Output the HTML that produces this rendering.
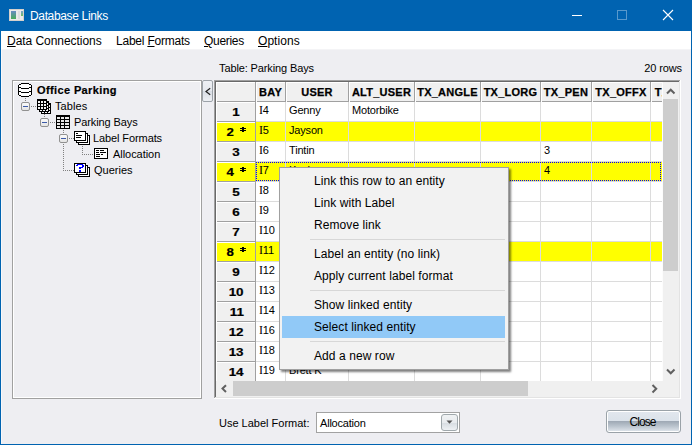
<!DOCTYPE html>
<html><head><meta charset="utf-8"><style>
html,body{margin:0;padding:0;}
body{width:692px;height:445px;position:relative;overflow:hidden;font-family:'Liberation Sans', sans-serif;}
div{box-sizing:content-box;}
u{text-decoration:underline;}
</style></head><body>
<div style="position:absolute;left:0px;top:0px;width:692px;height:445px;background:#0063b1;"></div><div style="position:absolute;left:1px;top:31px;width:690px;height:413px;background:#eeeef2;"></div><svg style="position:absolute;left:9px;top:9px" width="15" height="12" shape-rendering="crispEdges">
<rect x="0" y="0" width="15" height="12" fill="#ecebea"/>
<rect x="0.5" y="0.5" width="14" height="11" fill="none" stroke="#d4d0cc"/>
<defs><linearGradient id="tg" x1="0" y1="0" x2="0" y2="1"><stop offset="0" stop-color="#6a8cc4"/><stop offset="1" stop-color="#48ac58"/></linearGradient>
<linearGradient id="tg2" x1="0" y1="0" x2="0" y2="1"><stop offset="0" stop-color="#7a9ed0"/><stop offset="1" stop-color="#70c060"/></linearGradient></defs>
<rect x="2" y="2" width="5" height="8" fill="url(#tg)"/>
<rect x="9" y="2" width="2" height="8" fill="#dedede"/>
<rect x="12" y="2" width="2" height="5" fill="url(#tg2)"/>
</svg><div style="position:absolute;left:30px;top:9px;font-size:12px;line-height:14px;color:#fff;white-space:nowrap;letter-spacing:-0.35px;">Database Links</div><div style="position:absolute;left:572px;top:15px;width:10px;height:1px;background:#fff;"></div><div style="position:absolute;left:617px;top:10px;width:8px;height:8px;border:1px solid rgba(255,255,255,0.35)"></div><svg style="position:absolute;left:662px;top:9px" width="12" height="12"><path d="M1 1 L11 11 M11 1 L1 11" stroke="#fff" stroke-width="1.1"/></svg><div style="position:absolute;left:1px;top:31px;width:690px;height:18px;background:#fff;"></div><div style="position:absolute;left:1px;top:49px;width:690px;height:1px;background:#f4f4f6;"></div><div style="position:absolute;left:1px;top:49px;width:1px;height:395px;background:#f8f8fa;"></div><div style="position:absolute;left:7px;top:34px;font-size:12px;line-height:14px;color:#000;white-space:nowrap;letter-spacing:-0.05px;"><u>D</u>ata Connections</div><div style="position:absolute;left:116px;top:34px;font-size:12px;line-height:14px;color:#000;white-space:nowrap;letter-spacing:-0.22px;">Label <u>F</u>ormats</div><div style="position:absolute;left:204px;top:34px;font-size:12px;line-height:14px;color:#000;white-space:nowrap;letter-spacing:-0.3px;"><u>Q</u>ueries</div><div style="position:absolute;left:258px;top:34px;font-size:12px;line-height:14px;color:#000;white-space:nowrap;letter-spacing:0.05px;"><u>O</u>ptions</div><div style="position:absolute;left:219px;top:62px;font-size:11px;line-height:13px;color:#000;white-space:nowrap;letter-spacing:-0.12px;">Table: Parking Bays</div><div style="position:absolute;left:602px;top:62px;font-size:11px;line-height:13px;color:#000;white-space:nowrap;width:80px;text-align:right;letter-spacing:-0.1px;">20 rows</div><div style="position:absolute;left:12px;top:80px;width:188px;height:317px;border:1px solid #a0a0a0;border-right-color:#a0a0a0"></div><div style="position:absolute;left:13px;top:81px;width:186px;height:315px;border:1px solid #fff"></div><svg style="position:absolute;left:18px;top:83px" width="14" height="14" shape-rendering="crispEdges"><g fill="#000"><rect x="1" y="1" width="12" height="12" fill="#fff"/><rect x="3" y="0" width="8" height="1"/><rect x="1" y="1" width="2" height="1"/><rect x="11" y="1" width="2" height="1"/><rect x="0" y="2" width="1" height="10"/><rect x="13" y="2" width="1" height="10"/><rect x="1" y="4" width="2" height="1"/><rect x="11" y="4" width="2" height="1"/><rect x="3" y="5" width="8" height="1"/><rect x="1" y="8" width="2" height="1"/><rect x="11" y="8" width="2" height="1"/><rect x="3" y="9" width="8" height="1"/><rect x="1" y="12" width="2" height="1"/><rect x="11" y="12" width="2" height="1"/><rect x="3" y="13" width="8" height="1"/></g></svg><div style="position:absolute;left:37px;top:84px;font-size:11px;line-height:13px;color:#000;font-weight:bold;white-space:nowrap;letter-spacing:0.38px;-webkit-text-stroke:0.2px #000;">Office Parking</div><div style="position:absolute;left:25px;top:98px;width:1px;height:1px;background:#808080;"></div><div style="position:absolute;left:25px;top:100px;width:1px;height:1px;background:#808080;"></div><div style="position:absolute;left:21px;top:102px;width:7px;height:7px;border:1px solid #919191;border-radius:2px;background:linear-gradient(#fafafa,#e4e4e4)"></div><div style="position:absolute;left:23px;top:106px;width:5px;height:1px;background:#3c5aa8;"></div><div style="position:absolute;left:31px;top:106px;width:1px;height:1px;background:#808080;"></div><div style="position:absolute;left:33px;top:106px;width:1px;height:1px;background:#808080;"></div><div style="position:absolute;left:35px;top:106px;width:1px;height:1px;background:#808080;"></div><svg style="position:absolute;left:37px;top:99px" width="15" height="16" shape-rendering="crispEdges"><rect x="4" y="4" width="10" height="11" fill="#000"/><rect x="5" y="6" width="2" height="2" fill="#f4f4f4"/><rect x="5" y="9" width="2" height="2" fill="#f4f4f4"/><rect x="5" y="12" width="2" height="2" fill="#f4f4f4"/><rect x="8" y="6" width="2" height="2" fill="#f4f4f4"/><rect x="8" y="9" width="2" height="2" fill="#f4f4f4"/><rect x="8" y="12" width="2" height="2" fill="#f4f4f4"/><rect x="11" y="6" width="2" height="2" fill="#f4f4f4"/><rect x="11" y="9" width="2" height="2" fill="#f4f4f4"/><rect x="11" y="12" width="2" height="2" fill="#f4f4f4"/><rect x="2" y="2" width="10" height="11" fill="#000"/><rect x="3" y="4" width="2" height="2" fill="#f4f4f4"/><rect x="3" y="7" width="2" height="2" fill="#f4f4f4"/><rect x="3" y="10" width="2" height="2" fill="#f4f4f4"/><rect x="6" y="4" width="2" height="2" fill="#f4f4f4"/><rect x="6" y="7" width="2" height="2" fill="#f4f4f4"/><rect x="6" y="10" width="2" height="2" fill="#f4f4f4"/><rect x="9" y="4" width="2" height="2" fill="#f4f4f4"/><rect x="9" y="7" width="2" height="2" fill="#f4f4f4"/><rect x="9" y="10" width="2" height="2" fill="#f4f4f4"/><rect x="0" y="0" width="10" height="11" fill="#000"/><rect x="1" y="2" width="2" height="2" fill="#f4f4f4"/><rect x="1" y="5" width="2" height="2" fill="#f4f4f4"/><rect x="1" y="8" width="2" height="2" fill="#f4f4f4"/><rect x="4" y="2" width="2" height="2" fill="#f4f4f4"/><rect x="4" y="5" width="2" height="2" fill="#f4f4f4"/><rect x="4" y="8" width="2" height="2" fill="#f4f4f4"/><rect x="7" y="2" width="2" height="2" fill="#f4f4f4"/><rect x="7" y="5" width="2" height="2" fill="#f4f4f4"/><rect x="7" y="8" width="2" height="2" fill="#f4f4f4"/></svg><div style="position:absolute;left:55px;top:100px;font-size:11px;line-height:13px;color:#000;white-space:nowrap;letter-spacing:0.1px;">Tables</div><div style="position:absolute;left:44px;top:114px;width:1px;height:1px;background:#808080;"></div><div style="position:absolute;left:44px;top:116px;width:1px;height:1px;background:#808080;"></div><div style="position:absolute;left:40px;top:118px;width:7px;height:7px;border:1px solid #919191;border-radius:2px;background:linear-gradient(#fafafa,#e4e4e4)"></div><div style="position:absolute;left:42px;top:122px;width:5px;height:1px;background:#3c5aa8;"></div><div style="position:absolute;left:50px;top:122px;width:1px;height:1px;background:#808080;"></div><div style="position:absolute;left:52px;top:122px;width:1px;height:1px;background:#808080;"></div><div style="position:absolute;left:54px;top:122px;width:1px;height:1px;background:#808080;"></div><svg style="position:absolute;left:56px;top:115px" width="14" height="14" shape-rendering="crispEdges"><rect width="14" height="14" fill="#000"/><rect x="1" y="2" width="3" height="2" fill="#e8e8e8"/><rect x="1" y="5" width="3" height="2" fill="#e8e8e8"/><rect x="1" y="8" width="3" height="2" fill="#e8e8e8"/><rect x="1" y="11" width="3" height="2" fill="#e8e8e8"/><rect x="5" y="2" width="3" height="2" fill="#e8e8e8"/><rect x="5" y="5" width="3" height="2" fill="#e8e8e8"/><rect x="5" y="8" width="3" height="2" fill="#e8e8e8"/><rect x="5" y="11" width="3" height="2" fill="#e8e8e8"/><rect x="9" y="2" width="4" height="2" fill="#e8e8e8"/><rect x="9" y="5" width="4" height="2" fill="#e8e8e8"/><rect x="9" y="8" width="4" height="2" fill="#e8e8e8"/><rect x="9" y="11" width="4" height="2" fill="#e8e8e8"/></svg><div style="position:absolute;left:74px;top:116px;font-size:11px;line-height:13px;color:#000;white-space:nowrap;letter-spacing:-0.1px;">Parking Bays</div><div style="position:absolute;left:63px;top:130px;width:1px;height:1px;background:#808080;"></div><div style="position:absolute;left:63px;top:132px;width:1px;height:1px;background:#808080;"></div><div style="position:absolute;left:59px;top:134px;width:7px;height:7px;border:1px solid #919191;border-radius:2px;background:linear-gradient(#fafafa,#e4e4e4)"></div><div style="position:absolute;left:61px;top:138px;width:5px;height:1px;background:#3c5aa8;"></div><div style="position:absolute;left:69px;top:138px;width:1px;height:1px;background:#808080;"></div><div style="position:absolute;left:71px;top:138px;width:1px;height:1px;background:#808080;"></div><div style="position:absolute;left:73px;top:138px;width:1px;height:1px;background:#808080;"></div><svg style="position:absolute;left:74px;top:131px" width="16" height="14" shape-rendering="crispEdges"><rect x="4" y="4" width="12" height="10" fill="#000"/><rect x="5" y="5" width="10" height="8" fill="#fff"/><rect x="2" y="2" width="12" height="10" fill="#000"/><rect x="3" y="3" width="10" height="8" fill="#fff"/><rect x="0" y="0" width="12" height="10" fill="#000"/><rect x="1" y="1" width="10" height="8" fill="#fff"/><rect x="2" y="2" width="2" height="1" fill="#000"/><rect x="2" y="4" width="6" height="1" fill="#000"/><rect x="2" y="6" width="5" height="1" fill="#000"/></svg><div style="position:absolute;left:93px;top:132px;font-size:11px;line-height:13px;color:#000;white-space:nowrap;letter-spacing:-0.1px;">Label Formats</div><div style="position:absolute;left:82px;top:146px;width:1px;height:1px;background:#808080;"></div><div style="position:absolute;left:82px;top:148px;width:1px;height:1px;background:#808080;"></div><div style="position:absolute;left:82px;top:150px;width:1px;height:1px;background:#808080;"></div><div style="position:absolute;left:82px;top:152px;width:1px;height:1px;background:#808080;"></div><div style="position:absolute;left:82px;top:154px;width:1px;height:1px;background:#808080;"></div><div style="position:absolute;left:84px;top:154px;width:1px;height:1px;background:#808080;"></div><div style="position:absolute;left:86px;top:154px;width:1px;height:1px;background:#808080;"></div><div style="position:absolute;left:88px;top:154px;width:1px;height:1px;background:#808080;"></div><div style="position:absolute;left:90px;top:154px;width:1px;height:1px;background:#808080;"></div><div style="position:absolute;left:92px;top:154px;width:1px;height:1px;background:#808080;"></div><svg style="position:absolute;left:94px;top:148px" width="14" height="11" shape-rendering="crispEdges"><rect width="14" height="11" fill="#000"/><rect x="1" y="1" width="12" height="9" fill="#fff"/><g fill="#000"><rect x="2" y="2" width="3" height="1"/><rect x="6" y="2" width="4" height="1"/><rect x="2" y="4" width="3" height="1"/><rect x="6" y="4" width="6" height="1"/><rect x="2" y="6" width="4" height="1"/><rect x="7" y="6" width="2" height="1"/><rect x="2" y="8" width="4" height="1"/></g></svg><div style="position:absolute;left:113px;top:148px;font-size:11px;line-height:13px;color:#000;white-space:nowrap;letter-spacing:-0.05px;">Allocation</div><div style="position:absolute;left:63px;top:144px;width:1px;height:1px;background:#808080;"></div><div style="position:absolute;left:63px;top:146px;width:1px;height:1px;background:#808080;"></div><div style="position:absolute;left:63px;top:148px;width:1px;height:1px;background:#808080;"></div><div style="position:absolute;left:63px;top:150px;width:1px;height:1px;background:#808080;"></div><div style="position:absolute;left:63px;top:152px;width:1px;height:1px;background:#808080;"></div><div style="position:absolute;left:63px;top:154px;width:1px;height:1px;background:#808080;"></div><div style="position:absolute;left:63px;top:156px;width:1px;height:1px;background:#808080;"></div><div style="position:absolute;left:63px;top:158px;width:1px;height:1px;background:#808080;"></div><div style="position:absolute;left:63px;top:160px;width:1px;height:1px;background:#808080;"></div><div style="position:absolute;left:63px;top:162px;width:1px;height:1px;background:#808080;"></div><div style="position:absolute;left:63px;top:164px;width:1px;height:1px;background:#808080;"></div><div style="position:absolute;left:63px;top:166px;width:1px;height:1px;background:#808080;"></div><div style="position:absolute;left:63px;top:168px;width:1px;height:1px;background:#808080;"></div><div style="position:absolute;left:63px;top:170px;width:1px;height:1px;background:#808080;"></div><div style="position:absolute;left:65px;top:170px;width:1px;height:1px;background:#808080;"></div><div style="position:absolute;left:67px;top:170px;width:1px;height:1px;background:#808080;"></div><div style="position:absolute;left:69px;top:170px;width:1px;height:1px;background:#808080;"></div><div style="position:absolute;left:71px;top:170px;width:1px;height:1px;background:#808080;"></div><div style="position:absolute;left:73px;top:170px;width:1px;height:1px;background:#808080;"></div><svg style="position:absolute;left:74px;top:163px" width="16" height="14" shape-rendering="crispEdges"><rect x="4" y="4" width="12" height="10" fill="#000"/><rect x="5" y="5" width="10" height="8" fill="#fff"/><rect x="2" y="2" width="12" height="10" fill="#000"/><rect x="3" y="3" width="10" height="8" fill="#fff"/><rect x="0" y="0" width="12" height="10" fill="#000"/><rect x="1" y="1" width="10" height="8" fill="#fff"/><rect x="3" y="1" width="6" height="1" fill="#0000ff"/><rect x="2" y="2" width="2" height="1" fill="#0000ff"/><rect x="8" y="2" width="2" height="2" fill="#0000ff"/><rect x="5" y="4" width="4" height="1" fill="#0000ff"/><rect x="5" y="5" width="2" height="1" fill="#0000ff"/><rect x="5" y="7" width="2" height="2" fill="#0000ff"/></svg><div style="position:absolute;left:94px;top:164px;font-size:11px;line-height:13px;color:#000;white-space:nowrap;">Queries</div><div style="position:absolute;left:202px;top:80px;width:9px;height:20px;border:1px solid #9ca2a8;border-radius:2px;background:linear-gradient(#eef0f4 0%,#e6e9ee 50%,#d8dde4 51%,#eef0f4 100%)"></div><svg style="position:absolute;left:204px;top:87px" width="8" height="9"><path d="M6.2 1.3 L2 4.5 L6.2 7.7" fill="none" stroke="#202020" stroke-width="1.2"/></svg><div style="position:absolute;left:214px;top:80px;width:467px;height:1px;background:#a0a0a0;"></div><div style="position:absolute;left:214px;top:80px;width:1px;height:319px;background:#a0a0a0;"></div><div style="position:absolute;left:215px;top:81px;width:465px;height:1px;background:#696969;"></div><div style="position:absolute;left:215px;top:81px;width:1px;height:317px;background:#696969;"></div><div style="position:absolute;left:215px;top:397px;width:465px;height:1px;background:#e3e3e3;"></div><div style="position:absolute;left:679px;top:81px;width:1px;height:317px;background:#e3e3e3;"></div><div style="position:absolute;left:214px;top:398px;width:467px;height:1px;background:#fff;"></div><div style="position:absolute;left:680px;top:80px;width:1px;height:319px;background:#fff;"></div><div style="position:absolute;left:216px;top:82px;width:446px;height:299px;overflow:hidden;background:#fff"><div style="position:absolute;left:0px;top:0px;width:40px;height:20px;background:#f0f0f0;"></div><div style="position:absolute;left:0px;top:0px;width:39px;height:1px;background:#fff;"></div><div style="position:absolute;left:0px;top:0px;width:1px;height:20px;background:#fff;"></div><div style="position:absolute;left:39px;top:0px;width:1px;height:20px;background:#a0a0a0;"></div><div style="position:absolute;left:1px;top:19px;width:39px;height:1px;background:#a0a0a0;"></div><div style="position:absolute;left:40px;top:0px;width:30px;height:20px;background:#f0f0f0;"></div><div style="position:absolute;left:40px;top:0px;width:29px;height:1px;background:#fff;"></div><div style="position:absolute;left:40px;top:0px;width:1px;height:20px;background:#fff;"></div><div style="position:absolute;left:69px;top:0px;width:1px;height:20px;background:#a0a0a0;"></div><div style="position:absolute;left:41px;top:19px;width:29px;height:1px;background:#a0a0a0;"></div><div style="position:absolute;left:40px;top:4px;font-size:11px;line-height:13px;color:#000;font-weight:bold;white-space:nowrap;width:29px;text-align:center;letter-spacing:0.25px;-webkit-text-stroke:0.25px #000;">BAY</div><div style="position:absolute;left:70px;top:0px;width:63px;height:20px;background:#f0f0f0;"></div><div style="position:absolute;left:70px;top:0px;width:62px;height:1px;background:#fff;"></div><div style="position:absolute;left:70px;top:0px;width:1px;height:20px;background:#fff;"></div><div style="position:absolute;left:132px;top:0px;width:1px;height:20px;background:#a0a0a0;"></div><div style="position:absolute;left:71px;top:19px;width:62px;height:1px;background:#a0a0a0;"></div><div style="position:absolute;left:70px;top:4px;font-size:11px;line-height:13px;color:#000;font-weight:bold;white-space:nowrap;width:62px;text-align:center;letter-spacing:0.25px;-webkit-text-stroke:0.25px #000;">USER</div><div style="position:absolute;left:133px;top:0px;width:66px;height:20px;background:#f0f0f0;"></div><div style="position:absolute;left:133px;top:0px;width:65px;height:1px;background:#fff;"></div><div style="position:absolute;left:133px;top:0px;width:1px;height:20px;background:#fff;"></div><div style="position:absolute;left:198px;top:0px;width:1px;height:20px;background:#a0a0a0;"></div><div style="position:absolute;left:134px;top:19px;width:65px;height:1px;background:#a0a0a0;"></div><div style="position:absolute;left:133px;top:4px;font-size:11px;line-height:13px;color:#000;font-weight:bold;white-space:nowrap;width:65px;text-align:center;letter-spacing:0.25px;-webkit-text-stroke:0.25px #000;">ALT_USER</div><div style="position:absolute;left:199px;top:0px;width:66px;height:20px;background:#f0f0f0;"></div><div style="position:absolute;left:199px;top:0px;width:65px;height:1px;background:#fff;"></div><div style="position:absolute;left:199px;top:0px;width:1px;height:20px;background:#fff;"></div><div style="position:absolute;left:264px;top:0px;width:1px;height:20px;background:#a0a0a0;"></div><div style="position:absolute;left:200px;top:19px;width:65px;height:1px;background:#a0a0a0;"></div><div style="position:absolute;left:199px;top:4px;font-size:11px;line-height:13px;color:#000;font-weight:bold;white-space:nowrap;width:65px;text-align:center;letter-spacing:0.25px;-webkit-text-stroke:0.25px #000;">TX_ANGLE</div><div style="position:absolute;left:265px;top:0px;width:60px;height:20px;background:#f0f0f0;"></div><div style="position:absolute;left:265px;top:0px;width:59px;height:1px;background:#fff;"></div><div style="position:absolute;left:265px;top:0px;width:1px;height:20px;background:#fff;"></div><div style="position:absolute;left:324px;top:0px;width:1px;height:20px;background:#a0a0a0;"></div><div style="position:absolute;left:266px;top:19px;width:59px;height:1px;background:#a0a0a0;"></div><div style="position:absolute;left:265px;top:4px;font-size:11px;line-height:13px;color:#000;font-weight:bold;white-space:nowrap;width:59px;text-align:center;letter-spacing:0.25px;-webkit-text-stroke:0.25px #000;">TX_LORG</div><div style="position:absolute;left:325px;top:0px;width:51px;height:20px;background:#f0f0f0;"></div><div style="position:absolute;left:325px;top:0px;width:50px;height:1px;background:#fff;"></div><div style="position:absolute;left:325px;top:0px;width:1px;height:20px;background:#fff;"></div><div style="position:absolute;left:375px;top:0px;width:1px;height:20px;background:#a0a0a0;"></div><div style="position:absolute;left:326px;top:19px;width:50px;height:1px;background:#a0a0a0;"></div><div style="position:absolute;left:325px;top:4px;font-size:11px;line-height:13px;color:#000;font-weight:bold;white-space:nowrap;width:50px;text-align:center;letter-spacing:0.25px;-webkit-text-stroke:0.25px #000;">TX_PEN</div><div style="position:absolute;left:376px;top:0px;width:59px;height:20px;background:#f0f0f0;"></div><div style="position:absolute;left:376px;top:0px;width:58px;height:1px;background:#fff;"></div><div style="position:absolute;left:376px;top:0px;width:1px;height:20px;background:#fff;"></div><div style="position:absolute;left:434px;top:0px;width:1px;height:20px;background:#a0a0a0;"></div><div style="position:absolute;left:377px;top:19px;width:58px;height:1px;background:#a0a0a0;"></div><div style="position:absolute;left:376px;top:4px;font-size:11px;line-height:13px;color:#000;font-weight:bold;white-space:nowrap;width:58px;text-align:center;letter-spacing:0.25px;-webkit-text-stroke:0.25px #000;">TX_OFFX</div><div style="position:absolute;left:435px;top:0px;width:60px;height:20px;background:#f0f0f0;"></div><div style="position:absolute;left:435px;top:0px;width:59px;height:1px;background:#fff;"></div><div style="position:absolute;left:435px;top:0px;width:1px;height:20px;background:#fff;"></div><div style="position:absolute;left:494px;top:0px;width:1px;height:20px;background:#a0a0a0;"></div><div style="position:absolute;left:436px;top:19px;width:59px;height:1px;background:#a0a0a0;"></div><div style="position:absolute;left:435px;top:4px;font-size:11px;line-height:13px;color:#000;font-weight:bold;white-space:nowrap;width:59px;text-align:center;letter-spacing:0.25px;-webkit-text-stroke:0.25px #000;">TX_OFFY</div><div style="position:absolute;left:0px;top:20px;width:40px;height:20px;background:#f0f0f0;"></div><div style="position:absolute;left:0px;top:20px;width:39px;height:1px;background:#fff;"></div><div style="position:absolute;left:0px;top:20px;width:1px;height:20px;background:#fff;"></div><div style="position:absolute;left:39px;top:20px;width:1px;height:20px;background:#a0a0a0;"></div><div style="position:absolute;left:1px;top:39px;width:39px;height:1px;background:#a0a0a0;"></div><div style="position:absolute;left:0px;top:24px;font-size:11px;line-height:13px;color:#000;font-weight:bold;white-space:nowrap;width:39px;text-align:center;padding-left:1px;box-sizing:border-box;width:40px;-webkit-text-stroke:0.2px #000;"><span style="display:inline-block;transform:scaleX(1.22)">1</span></div><div style="position:absolute;left:40px;top:20px;width:30px;height:20px;background:#fff;"></div><div style="position:absolute;left:69px;top:20px;width:1px;height:20px;background:#dcdcdc;"></div><div style="position:absolute;left:40px;top:39px;width:30px;height:1px;background:#dcdcdc;"></div><div style="position:absolute;left:43px;top:22px;font-size:11px;line-height:13px;color:#000;white-space:nowrap;letter-spacing:-0.18px;"><span style="font-family:Liberation Serif;font-size:12px;">I</span>4</div><div style="position:absolute;left:70px;top:20px;width:63px;height:20px;background:#fff;"></div><div style="position:absolute;left:132px;top:20px;width:1px;height:20px;background:#dcdcdc;"></div><div style="position:absolute;left:70px;top:39px;width:63px;height:1px;background:#dcdcdc;"></div><div style="position:absolute;left:73px;top:22px;font-size:11px;line-height:13px;color:#000;white-space:nowrap;letter-spacing:-0.18px;">Genny</div><div style="position:absolute;left:133px;top:20px;width:66px;height:20px;background:#fff;"></div><div style="position:absolute;left:198px;top:20px;width:1px;height:20px;background:#dcdcdc;"></div><div style="position:absolute;left:133px;top:39px;width:66px;height:1px;background:#dcdcdc;"></div><div style="position:absolute;left:136px;top:22px;font-size:11px;line-height:13px;color:#000;white-space:nowrap;letter-spacing:-0.18px;">Motorbike</div><div style="position:absolute;left:199px;top:20px;width:66px;height:20px;background:#fff;"></div><div style="position:absolute;left:264px;top:20px;width:1px;height:20px;background:#dcdcdc;"></div><div style="position:absolute;left:199px;top:39px;width:66px;height:1px;background:#dcdcdc;"></div><div style="position:absolute;left:265px;top:20px;width:60px;height:20px;background:#fff;"></div><div style="position:absolute;left:324px;top:20px;width:1px;height:20px;background:#dcdcdc;"></div><div style="position:absolute;left:265px;top:39px;width:60px;height:1px;background:#dcdcdc;"></div><div style="position:absolute;left:325px;top:20px;width:51px;height:20px;background:#fff;"></div><div style="position:absolute;left:375px;top:20px;width:1px;height:20px;background:#dcdcdc;"></div><div style="position:absolute;left:325px;top:39px;width:51px;height:1px;background:#dcdcdc;"></div><div style="position:absolute;left:376px;top:20px;width:59px;height:20px;background:#fff;"></div><div style="position:absolute;left:434px;top:20px;width:1px;height:20px;background:#dcdcdc;"></div><div style="position:absolute;left:376px;top:39px;width:59px;height:1px;background:#dcdcdc;"></div><div style="position:absolute;left:435px;top:20px;width:60px;height:20px;background:#fff;"></div><div style="position:absolute;left:494px;top:20px;width:1px;height:20px;background:#dcdcdc;"></div><div style="position:absolute;left:435px;top:39px;width:60px;height:1px;background:#dcdcdc;"></div><div style="position:absolute;left:0px;top:40px;width:40px;height:20px;background:#ffff00;"></div><div style="position:absolute;left:0px;top:40px;width:39px;height:1px;background:#fff;"></div><div style="position:absolute;left:0px;top:40px;width:1px;height:20px;background:#fff;"></div><div style="position:absolute;left:39px;top:40px;width:1px;height:20px;background:#a0a0a0;"></div><div style="position:absolute;left:1px;top:59px;width:39px;height:1px;background:#a0a0a0;"></div><div style="position:absolute;left:0px;top:44px;font-size:11px;line-height:13px;color:#000;font-weight:bold;white-space:nowrap;width:39px;text-align:center;padding-left:1px;box-sizing:border-box;width:40px;-webkit-text-stroke:0.2px #000;"><span style="display:inline-block;transform:scaleX(1.2)">2</span><span style="display:inline-block;width:5px"></span><svg width="7" height="6" style="vertical-align:top;margin-top:1px" shape-rendering="crispEdges"><rect x="2.5" y="0" width="2" height="5" fill="#000"/><rect x="0.5" y="1" width="6" height="1" fill="#000"/><rect x="0.5" y="3" width="6" height="1" fill="#000"/></svg></div><div style="position:absolute;left:40px;top:40px;width:30px;height:20px;background:#ffff00;"></div><div style="position:absolute;left:69px;top:40px;width:1px;height:20px;background:#dcdcdc;"></div><div style="position:absolute;left:40px;top:59px;width:30px;height:1px;background:#dcdcdc;"></div><div style="position:absolute;left:43px;top:42px;font-size:11px;line-height:13px;color:#000;white-space:nowrap;letter-spacing:-0.18px;"><span style="font-family:Liberation Serif;font-size:12px;">I</span>5</div><div style="position:absolute;left:70px;top:40px;width:63px;height:20px;background:#ffff00;"></div><div style="position:absolute;left:132px;top:40px;width:1px;height:20px;background:#dcdcdc;"></div><div style="position:absolute;left:70px;top:59px;width:63px;height:1px;background:#dcdcdc;"></div><div style="position:absolute;left:73px;top:42px;font-size:11px;line-height:13px;color:#000;white-space:nowrap;letter-spacing:-0.18px;">Jayson</div><div style="position:absolute;left:133px;top:40px;width:66px;height:20px;background:#ffff00;"></div><div style="position:absolute;left:198px;top:40px;width:1px;height:20px;background:#dcdcdc;"></div><div style="position:absolute;left:133px;top:59px;width:66px;height:1px;background:#dcdcdc;"></div><div style="position:absolute;left:199px;top:40px;width:66px;height:20px;background:#ffff00;"></div><div style="position:absolute;left:264px;top:40px;width:1px;height:20px;background:#dcdcdc;"></div><div style="position:absolute;left:199px;top:59px;width:66px;height:1px;background:#dcdcdc;"></div><div style="position:absolute;left:265px;top:40px;width:60px;height:20px;background:#ffff00;"></div><div style="position:absolute;left:324px;top:40px;width:1px;height:20px;background:#dcdcdc;"></div><div style="position:absolute;left:265px;top:59px;width:60px;height:1px;background:#dcdcdc;"></div><div style="position:absolute;left:325px;top:40px;width:51px;height:20px;background:#ffff00;"></div><div style="position:absolute;left:375px;top:40px;width:1px;height:20px;background:#dcdcdc;"></div><div style="position:absolute;left:325px;top:59px;width:51px;height:1px;background:#dcdcdc;"></div><div style="position:absolute;left:376px;top:40px;width:59px;height:20px;background:#ffff00;"></div><div style="position:absolute;left:434px;top:40px;width:1px;height:20px;background:#dcdcdc;"></div><div style="position:absolute;left:376px;top:59px;width:59px;height:1px;background:#dcdcdc;"></div><div style="position:absolute;left:435px;top:40px;width:60px;height:20px;background:#ffff00;"></div><div style="position:absolute;left:494px;top:40px;width:1px;height:20px;background:#dcdcdc;"></div><div style="position:absolute;left:435px;top:59px;width:60px;height:1px;background:#dcdcdc;"></div><div style="position:absolute;left:0px;top:60px;width:40px;height:20px;background:#f0f0f0;"></div><div style="position:absolute;left:0px;top:60px;width:39px;height:1px;background:#fff;"></div><div style="position:absolute;left:0px;top:60px;width:1px;height:20px;background:#fff;"></div><div style="position:absolute;left:39px;top:60px;width:1px;height:20px;background:#a0a0a0;"></div><div style="position:absolute;left:1px;top:79px;width:39px;height:1px;background:#a0a0a0;"></div><div style="position:absolute;left:0px;top:64px;font-size:11px;line-height:13px;color:#000;font-weight:bold;white-space:nowrap;width:39px;text-align:center;padding-left:1px;box-sizing:border-box;width:40px;-webkit-text-stroke:0.2px #000;"><span style="display:inline-block;transform:scaleX(1.22)">3</span></div><div style="position:absolute;left:40px;top:60px;width:30px;height:20px;background:#fff;"></div><div style="position:absolute;left:69px;top:60px;width:1px;height:20px;background:#dcdcdc;"></div><div style="position:absolute;left:40px;top:79px;width:30px;height:1px;background:#dcdcdc;"></div><div style="position:absolute;left:43px;top:62px;font-size:11px;line-height:13px;color:#000;white-space:nowrap;letter-spacing:-0.18px;"><span style="font-family:Liberation Serif;font-size:12px;">I</span>6</div><div style="position:absolute;left:70px;top:60px;width:63px;height:20px;background:#fff;"></div><div style="position:absolute;left:132px;top:60px;width:1px;height:20px;background:#dcdcdc;"></div><div style="position:absolute;left:70px;top:79px;width:63px;height:1px;background:#dcdcdc;"></div><div style="position:absolute;left:73px;top:62px;font-size:11px;line-height:13px;color:#000;white-space:nowrap;letter-spacing:-0.18px;">Tintin</div><div style="position:absolute;left:133px;top:60px;width:66px;height:20px;background:#fff;"></div><div style="position:absolute;left:198px;top:60px;width:1px;height:20px;background:#dcdcdc;"></div><div style="position:absolute;left:133px;top:79px;width:66px;height:1px;background:#dcdcdc;"></div><div style="position:absolute;left:199px;top:60px;width:66px;height:20px;background:#fff;"></div><div style="position:absolute;left:264px;top:60px;width:1px;height:20px;background:#dcdcdc;"></div><div style="position:absolute;left:199px;top:79px;width:66px;height:1px;background:#dcdcdc;"></div><div style="position:absolute;left:265px;top:60px;width:60px;height:20px;background:#fff;"></div><div style="position:absolute;left:324px;top:60px;width:1px;height:20px;background:#dcdcdc;"></div><div style="position:absolute;left:265px;top:79px;width:60px;height:1px;background:#dcdcdc;"></div><div style="position:absolute;left:325px;top:60px;width:51px;height:20px;background:#fff;"></div><div style="position:absolute;left:375px;top:60px;width:1px;height:20px;background:#dcdcdc;"></div><div style="position:absolute;left:325px;top:79px;width:51px;height:1px;background:#dcdcdc;"></div><div style="position:absolute;left:328px;top:62px;font-size:11px;line-height:13px;color:#000;white-space:nowrap;letter-spacing:-0.18px;">3</div><div style="position:absolute;left:376px;top:60px;width:59px;height:20px;background:#fff;"></div><div style="position:absolute;left:434px;top:60px;width:1px;height:20px;background:#dcdcdc;"></div><div style="position:absolute;left:376px;top:79px;width:59px;height:1px;background:#dcdcdc;"></div><div style="position:absolute;left:435px;top:60px;width:60px;height:20px;background:#fff;"></div><div style="position:absolute;left:494px;top:60px;width:1px;height:20px;background:#dcdcdc;"></div><div style="position:absolute;left:435px;top:79px;width:60px;height:1px;background:#dcdcdc;"></div><div style="position:absolute;left:0px;top:80px;width:40px;height:20px;background:#ffff00;"></div><div style="position:absolute;left:0px;top:80px;width:39px;height:1px;background:#fff;"></div><div style="position:absolute;left:0px;top:80px;width:1px;height:20px;background:#fff;"></div><div style="position:absolute;left:39px;top:80px;width:1px;height:20px;background:#a0a0a0;"></div><div style="position:absolute;left:1px;top:99px;width:39px;height:1px;background:#a0a0a0;"></div><div style="position:absolute;left:0px;top:84px;font-size:11px;line-height:13px;color:#000;font-weight:bold;white-space:nowrap;width:39px;text-align:center;padding-left:1px;box-sizing:border-box;width:40px;-webkit-text-stroke:0.2px #000;"><span style="display:inline-block;transform:scaleX(1.2)">4</span><span style="display:inline-block;width:5px"></span><svg width="7" height="6" style="vertical-align:top;margin-top:1px" shape-rendering="crispEdges"><rect x="2.5" y="0" width="2" height="5" fill="#000"/><rect x="0.5" y="1" width="6" height="1" fill="#000"/><rect x="0.5" y="3" width="6" height="1" fill="#000"/></svg></div><div style="position:absolute;left:40px;top:80px;width:30px;height:20px;background:#ffff00;"></div><div style="position:absolute;left:69px;top:80px;width:1px;height:20px;background:#dcdcdc;"></div><div style="position:absolute;left:40px;top:99px;width:30px;height:1px;background:#dcdcdc;"></div><div style="position:absolute;left:43px;top:82px;font-size:11px;line-height:13px;color:#000;white-space:nowrap;letter-spacing:-0.18px;"><span style="font-family:Liberation Serif;font-size:12px;">I</span>7</div><div style="position:absolute;left:70px;top:80px;width:63px;height:20px;background:#ffff00;"></div><div style="position:absolute;left:132px;top:80px;width:1px;height:20px;background:#dcdcdc;"></div><div style="position:absolute;left:70px;top:99px;width:63px;height:1px;background:#dcdcdc;"></div><div style="position:absolute;left:73px;top:82px;font-size:11px;line-height:13px;color:#000;white-space:nowrap;letter-spacing:-0.18px;">Kevin</div><div style="position:absolute;left:133px;top:80px;width:66px;height:20px;background:#ffff00;"></div><div style="position:absolute;left:198px;top:80px;width:1px;height:20px;background:#dcdcdc;"></div><div style="position:absolute;left:133px;top:99px;width:66px;height:1px;background:#dcdcdc;"></div><div style="position:absolute;left:199px;top:80px;width:66px;height:20px;background:#ffff00;"></div><div style="position:absolute;left:264px;top:80px;width:1px;height:20px;background:#dcdcdc;"></div><div style="position:absolute;left:199px;top:99px;width:66px;height:1px;background:#dcdcdc;"></div><div style="position:absolute;left:265px;top:80px;width:60px;height:20px;background:#ffff00;"></div><div style="position:absolute;left:324px;top:80px;width:1px;height:20px;background:#dcdcdc;"></div><div style="position:absolute;left:265px;top:99px;width:60px;height:1px;background:#dcdcdc;"></div><div style="position:absolute;left:325px;top:80px;width:51px;height:20px;background:#ffff00;"></div><div style="position:absolute;left:375px;top:80px;width:1px;height:20px;background:#dcdcdc;"></div><div style="position:absolute;left:325px;top:99px;width:51px;height:1px;background:#dcdcdc;"></div><div style="position:absolute;left:328px;top:82px;font-size:11px;line-height:13px;color:#000;white-space:nowrap;letter-spacing:-0.18px;">4</div><div style="position:absolute;left:376px;top:80px;width:59px;height:20px;background:#ffff00;"></div><div style="position:absolute;left:434px;top:80px;width:1px;height:20px;background:#dcdcdc;"></div><div style="position:absolute;left:376px;top:99px;width:59px;height:1px;background:#dcdcdc;"></div><div style="position:absolute;left:435px;top:80px;width:60px;height:20px;background:#ffff00;"></div><div style="position:absolute;left:494px;top:80px;width:1px;height:20px;background:#dcdcdc;"></div><div style="position:absolute;left:435px;top:99px;width:60px;height:1px;background:#dcdcdc;"></div><div style="position:absolute;left:40px;top:80px;width:405px;height:1px;background:repeating-linear-gradient(90deg,#0000ff 0 1px,transparent 1px 2px)"></div><div style="position:absolute;left:40px;top:98px;width:405px;height:1px;background:repeating-linear-gradient(90deg,#0000ff 0 1px,transparent 1px 2px)"></div><div style="position:absolute;left:40px;top:80px;width:1px;height:19px;background:repeating-linear-gradient(180deg,#0000ff 0 1px,transparent 1px 2px)"></div><div style="position:absolute;left:444px;top:80px;width:1px;height:19px;background:repeating-linear-gradient(180deg,#0000ff 0 1px,transparent 1px 2px)"></div><div style="position:absolute;left:0px;top:100px;width:40px;height:20px;background:#f0f0f0;"></div><div style="position:absolute;left:0px;top:100px;width:39px;height:1px;background:#fff;"></div><div style="position:absolute;left:0px;top:100px;width:1px;height:20px;background:#fff;"></div><div style="position:absolute;left:39px;top:100px;width:1px;height:20px;background:#a0a0a0;"></div><div style="position:absolute;left:1px;top:119px;width:39px;height:1px;background:#a0a0a0;"></div><div style="position:absolute;left:0px;top:104px;font-size:11px;line-height:13px;color:#000;font-weight:bold;white-space:nowrap;width:39px;text-align:center;padding-left:1px;box-sizing:border-box;width:40px;-webkit-text-stroke:0.2px #000;"><span style="display:inline-block;transform:scaleX(1.22)">5</span></div><div style="position:absolute;left:40px;top:100px;width:30px;height:20px;background:#fff;"></div><div style="position:absolute;left:69px;top:100px;width:1px;height:20px;background:#dcdcdc;"></div><div style="position:absolute;left:40px;top:119px;width:30px;height:1px;background:#dcdcdc;"></div><div style="position:absolute;left:43px;top:102px;font-size:11px;line-height:13px;color:#000;white-space:nowrap;letter-spacing:-0.18px;"><span style="font-family:Liberation Serif;font-size:12px;">I</span>8</div><div style="position:absolute;left:70px;top:100px;width:63px;height:20px;background:#fff;"></div><div style="position:absolute;left:132px;top:100px;width:1px;height:20px;background:#dcdcdc;"></div><div style="position:absolute;left:70px;top:119px;width:63px;height:1px;background:#dcdcdc;"></div><div style="position:absolute;left:133px;top:100px;width:66px;height:20px;background:#fff;"></div><div style="position:absolute;left:198px;top:100px;width:1px;height:20px;background:#dcdcdc;"></div><div style="position:absolute;left:133px;top:119px;width:66px;height:1px;background:#dcdcdc;"></div><div style="position:absolute;left:199px;top:100px;width:66px;height:20px;background:#fff;"></div><div style="position:absolute;left:264px;top:100px;width:1px;height:20px;background:#dcdcdc;"></div><div style="position:absolute;left:199px;top:119px;width:66px;height:1px;background:#dcdcdc;"></div><div style="position:absolute;left:265px;top:100px;width:60px;height:20px;background:#fff;"></div><div style="position:absolute;left:324px;top:100px;width:1px;height:20px;background:#dcdcdc;"></div><div style="position:absolute;left:265px;top:119px;width:60px;height:1px;background:#dcdcdc;"></div><div style="position:absolute;left:325px;top:100px;width:51px;height:20px;background:#fff;"></div><div style="position:absolute;left:375px;top:100px;width:1px;height:20px;background:#dcdcdc;"></div><div style="position:absolute;left:325px;top:119px;width:51px;height:1px;background:#dcdcdc;"></div><div style="position:absolute;left:376px;top:100px;width:59px;height:20px;background:#fff;"></div><div style="position:absolute;left:434px;top:100px;width:1px;height:20px;background:#dcdcdc;"></div><div style="position:absolute;left:376px;top:119px;width:59px;height:1px;background:#dcdcdc;"></div><div style="position:absolute;left:435px;top:100px;width:60px;height:20px;background:#fff;"></div><div style="position:absolute;left:494px;top:100px;width:1px;height:20px;background:#dcdcdc;"></div><div style="position:absolute;left:435px;top:119px;width:60px;height:1px;background:#dcdcdc;"></div><div style="position:absolute;left:0px;top:120px;width:40px;height:20px;background:#f0f0f0;"></div><div style="position:absolute;left:0px;top:120px;width:39px;height:1px;background:#fff;"></div><div style="position:absolute;left:0px;top:120px;width:1px;height:20px;background:#fff;"></div><div style="position:absolute;left:39px;top:120px;width:1px;height:20px;background:#a0a0a0;"></div><div style="position:absolute;left:1px;top:139px;width:39px;height:1px;background:#a0a0a0;"></div><div style="position:absolute;left:0px;top:124px;font-size:11px;line-height:13px;color:#000;font-weight:bold;white-space:nowrap;width:39px;text-align:center;padding-left:1px;box-sizing:border-box;width:40px;-webkit-text-stroke:0.2px #000;"><span style="display:inline-block;transform:scaleX(1.22)">6</span></div><div style="position:absolute;left:40px;top:120px;width:30px;height:20px;background:#fff;"></div><div style="position:absolute;left:69px;top:120px;width:1px;height:20px;background:#dcdcdc;"></div><div style="position:absolute;left:40px;top:139px;width:30px;height:1px;background:#dcdcdc;"></div><div style="position:absolute;left:43px;top:122px;font-size:11px;line-height:13px;color:#000;white-space:nowrap;letter-spacing:-0.18px;"><span style="font-family:Liberation Serif;font-size:12px;">I</span>9</div><div style="position:absolute;left:70px;top:120px;width:63px;height:20px;background:#fff;"></div><div style="position:absolute;left:132px;top:120px;width:1px;height:20px;background:#dcdcdc;"></div><div style="position:absolute;left:70px;top:139px;width:63px;height:1px;background:#dcdcdc;"></div><div style="position:absolute;left:133px;top:120px;width:66px;height:20px;background:#fff;"></div><div style="position:absolute;left:198px;top:120px;width:1px;height:20px;background:#dcdcdc;"></div><div style="position:absolute;left:133px;top:139px;width:66px;height:1px;background:#dcdcdc;"></div><div style="position:absolute;left:199px;top:120px;width:66px;height:20px;background:#fff;"></div><div style="position:absolute;left:264px;top:120px;width:1px;height:20px;background:#dcdcdc;"></div><div style="position:absolute;left:199px;top:139px;width:66px;height:1px;background:#dcdcdc;"></div><div style="position:absolute;left:265px;top:120px;width:60px;height:20px;background:#fff;"></div><div style="position:absolute;left:324px;top:120px;width:1px;height:20px;background:#dcdcdc;"></div><div style="position:absolute;left:265px;top:139px;width:60px;height:1px;background:#dcdcdc;"></div><div style="position:absolute;left:325px;top:120px;width:51px;height:20px;background:#fff;"></div><div style="position:absolute;left:375px;top:120px;width:1px;height:20px;background:#dcdcdc;"></div><div style="position:absolute;left:325px;top:139px;width:51px;height:1px;background:#dcdcdc;"></div><div style="position:absolute;left:376px;top:120px;width:59px;height:20px;background:#fff;"></div><div style="position:absolute;left:434px;top:120px;width:1px;height:20px;background:#dcdcdc;"></div><div style="position:absolute;left:376px;top:139px;width:59px;height:1px;background:#dcdcdc;"></div><div style="position:absolute;left:435px;top:120px;width:60px;height:20px;background:#fff;"></div><div style="position:absolute;left:494px;top:120px;width:1px;height:20px;background:#dcdcdc;"></div><div style="position:absolute;left:435px;top:139px;width:60px;height:1px;background:#dcdcdc;"></div><div style="position:absolute;left:0px;top:140px;width:40px;height:20px;background:#f0f0f0;"></div><div style="position:absolute;left:0px;top:140px;width:39px;height:1px;background:#fff;"></div><div style="position:absolute;left:0px;top:140px;width:1px;height:20px;background:#fff;"></div><div style="position:absolute;left:39px;top:140px;width:1px;height:20px;background:#a0a0a0;"></div><div style="position:absolute;left:1px;top:159px;width:39px;height:1px;background:#a0a0a0;"></div><div style="position:absolute;left:0px;top:144px;font-size:11px;line-height:13px;color:#000;font-weight:bold;white-space:nowrap;width:39px;text-align:center;padding-left:1px;box-sizing:border-box;width:40px;-webkit-text-stroke:0.2px #000;"><span style="display:inline-block;transform:scaleX(1.22)">7</span></div><div style="position:absolute;left:40px;top:140px;width:30px;height:20px;background:#fff;"></div><div style="position:absolute;left:69px;top:140px;width:1px;height:20px;background:#dcdcdc;"></div><div style="position:absolute;left:40px;top:159px;width:30px;height:1px;background:#dcdcdc;"></div><div style="position:absolute;left:43px;top:142px;font-size:11px;line-height:13px;color:#000;white-space:nowrap;letter-spacing:-0.18px;"><span style="font-family:Liberation Serif;font-size:12px;">I</span>10</div><div style="position:absolute;left:70px;top:140px;width:63px;height:20px;background:#fff;"></div><div style="position:absolute;left:132px;top:140px;width:1px;height:20px;background:#dcdcdc;"></div><div style="position:absolute;left:70px;top:159px;width:63px;height:1px;background:#dcdcdc;"></div><div style="position:absolute;left:133px;top:140px;width:66px;height:20px;background:#fff;"></div><div style="position:absolute;left:198px;top:140px;width:1px;height:20px;background:#dcdcdc;"></div><div style="position:absolute;left:133px;top:159px;width:66px;height:1px;background:#dcdcdc;"></div><div style="position:absolute;left:199px;top:140px;width:66px;height:20px;background:#fff;"></div><div style="position:absolute;left:264px;top:140px;width:1px;height:20px;background:#dcdcdc;"></div><div style="position:absolute;left:199px;top:159px;width:66px;height:1px;background:#dcdcdc;"></div><div style="position:absolute;left:265px;top:140px;width:60px;height:20px;background:#fff;"></div><div style="position:absolute;left:324px;top:140px;width:1px;height:20px;background:#dcdcdc;"></div><div style="position:absolute;left:265px;top:159px;width:60px;height:1px;background:#dcdcdc;"></div><div style="position:absolute;left:325px;top:140px;width:51px;height:20px;background:#fff;"></div><div style="position:absolute;left:375px;top:140px;width:1px;height:20px;background:#dcdcdc;"></div><div style="position:absolute;left:325px;top:159px;width:51px;height:1px;background:#dcdcdc;"></div><div style="position:absolute;left:376px;top:140px;width:59px;height:20px;background:#fff;"></div><div style="position:absolute;left:434px;top:140px;width:1px;height:20px;background:#dcdcdc;"></div><div style="position:absolute;left:376px;top:159px;width:59px;height:1px;background:#dcdcdc;"></div><div style="position:absolute;left:435px;top:140px;width:60px;height:20px;background:#fff;"></div><div style="position:absolute;left:494px;top:140px;width:1px;height:20px;background:#dcdcdc;"></div><div style="position:absolute;left:435px;top:159px;width:60px;height:1px;background:#dcdcdc;"></div><div style="position:absolute;left:0px;top:160px;width:40px;height:20px;background:#ffff00;"></div><div style="position:absolute;left:0px;top:160px;width:39px;height:1px;background:#fff;"></div><div style="position:absolute;left:0px;top:160px;width:1px;height:20px;background:#fff;"></div><div style="position:absolute;left:39px;top:160px;width:1px;height:20px;background:#a0a0a0;"></div><div style="position:absolute;left:1px;top:179px;width:39px;height:1px;background:#a0a0a0;"></div><div style="position:absolute;left:0px;top:164px;font-size:11px;line-height:13px;color:#000;font-weight:bold;white-space:nowrap;width:39px;text-align:center;padding-left:1px;box-sizing:border-box;width:40px;-webkit-text-stroke:0.2px #000;"><span style="display:inline-block;transform:scaleX(1.2)">8</span><span style="display:inline-block;width:5px"></span><svg width="7" height="6" style="vertical-align:top;margin-top:1px" shape-rendering="crispEdges"><rect x="2.5" y="0" width="2" height="5" fill="#000"/><rect x="0.5" y="1" width="6" height="1" fill="#000"/><rect x="0.5" y="3" width="6" height="1" fill="#000"/></svg></div><div style="position:absolute;left:40px;top:160px;width:30px;height:20px;background:#ffff00;"></div><div style="position:absolute;left:69px;top:160px;width:1px;height:20px;background:#dcdcdc;"></div><div style="position:absolute;left:40px;top:179px;width:30px;height:1px;background:#dcdcdc;"></div><div style="position:absolute;left:43px;top:162px;font-size:11px;line-height:13px;color:#000;white-space:nowrap;letter-spacing:-0.18px;"><span style="font-family:Liberation Serif;font-size:12px;">I</span>11</div><div style="position:absolute;left:70px;top:160px;width:63px;height:20px;background:#ffff00;"></div><div style="position:absolute;left:132px;top:160px;width:1px;height:20px;background:#dcdcdc;"></div><div style="position:absolute;left:70px;top:179px;width:63px;height:1px;background:#dcdcdc;"></div><div style="position:absolute;left:133px;top:160px;width:66px;height:20px;background:#ffff00;"></div><div style="position:absolute;left:198px;top:160px;width:1px;height:20px;background:#dcdcdc;"></div><div style="position:absolute;left:133px;top:179px;width:66px;height:1px;background:#dcdcdc;"></div><div style="position:absolute;left:199px;top:160px;width:66px;height:20px;background:#ffff00;"></div><div style="position:absolute;left:264px;top:160px;width:1px;height:20px;background:#dcdcdc;"></div><div style="position:absolute;left:199px;top:179px;width:66px;height:1px;background:#dcdcdc;"></div><div style="position:absolute;left:265px;top:160px;width:60px;height:20px;background:#ffff00;"></div><div style="position:absolute;left:324px;top:160px;width:1px;height:20px;background:#dcdcdc;"></div><div style="position:absolute;left:265px;top:179px;width:60px;height:1px;background:#dcdcdc;"></div><div style="position:absolute;left:325px;top:160px;width:51px;height:20px;background:#ffff00;"></div><div style="position:absolute;left:375px;top:160px;width:1px;height:20px;background:#dcdcdc;"></div><div style="position:absolute;left:325px;top:179px;width:51px;height:1px;background:#dcdcdc;"></div><div style="position:absolute;left:376px;top:160px;width:59px;height:20px;background:#ffff00;"></div><div style="position:absolute;left:434px;top:160px;width:1px;height:20px;background:#dcdcdc;"></div><div style="position:absolute;left:376px;top:179px;width:59px;height:1px;background:#dcdcdc;"></div><div style="position:absolute;left:435px;top:160px;width:60px;height:20px;background:#ffff00;"></div><div style="position:absolute;left:494px;top:160px;width:1px;height:20px;background:#dcdcdc;"></div><div style="position:absolute;left:435px;top:179px;width:60px;height:1px;background:#dcdcdc;"></div><div style="position:absolute;left:0px;top:180px;width:40px;height:20px;background:#f0f0f0;"></div><div style="position:absolute;left:0px;top:180px;width:39px;height:1px;background:#fff;"></div><div style="position:absolute;left:0px;top:180px;width:1px;height:20px;background:#fff;"></div><div style="position:absolute;left:39px;top:180px;width:1px;height:20px;background:#a0a0a0;"></div><div style="position:absolute;left:1px;top:199px;width:39px;height:1px;background:#a0a0a0;"></div><div style="position:absolute;left:0px;top:184px;font-size:11px;line-height:13px;color:#000;font-weight:bold;white-space:nowrap;width:39px;text-align:center;padding-left:1px;box-sizing:border-box;width:40px;-webkit-text-stroke:0.2px #000;"><span style="display:inline-block;transform:scaleX(1.22)">9</span></div><div style="position:absolute;left:40px;top:180px;width:30px;height:20px;background:#fff;"></div><div style="position:absolute;left:69px;top:180px;width:1px;height:20px;background:#dcdcdc;"></div><div style="position:absolute;left:40px;top:199px;width:30px;height:1px;background:#dcdcdc;"></div><div style="position:absolute;left:43px;top:182px;font-size:11px;line-height:13px;color:#000;white-space:nowrap;letter-spacing:-0.18px;"><span style="font-family:Liberation Serif;font-size:12px;">I</span>12</div><div style="position:absolute;left:70px;top:180px;width:63px;height:20px;background:#fff;"></div><div style="position:absolute;left:132px;top:180px;width:1px;height:20px;background:#dcdcdc;"></div><div style="position:absolute;left:70px;top:199px;width:63px;height:1px;background:#dcdcdc;"></div><div style="position:absolute;left:133px;top:180px;width:66px;height:20px;background:#fff;"></div><div style="position:absolute;left:198px;top:180px;width:1px;height:20px;background:#dcdcdc;"></div><div style="position:absolute;left:133px;top:199px;width:66px;height:1px;background:#dcdcdc;"></div><div style="position:absolute;left:199px;top:180px;width:66px;height:20px;background:#fff;"></div><div style="position:absolute;left:264px;top:180px;width:1px;height:20px;background:#dcdcdc;"></div><div style="position:absolute;left:199px;top:199px;width:66px;height:1px;background:#dcdcdc;"></div><div style="position:absolute;left:265px;top:180px;width:60px;height:20px;background:#fff;"></div><div style="position:absolute;left:324px;top:180px;width:1px;height:20px;background:#dcdcdc;"></div><div style="position:absolute;left:265px;top:199px;width:60px;height:1px;background:#dcdcdc;"></div><div style="position:absolute;left:325px;top:180px;width:51px;height:20px;background:#fff;"></div><div style="position:absolute;left:375px;top:180px;width:1px;height:20px;background:#dcdcdc;"></div><div style="position:absolute;left:325px;top:199px;width:51px;height:1px;background:#dcdcdc;"></div><div style="position:absolute;left:376px;top:180px;width:59px;height:20px;background:#fff;"></div><div style="position:absolute;left:434px;top:180px;width:1px;height:20px;background:#dcdcdc;"></div><div style="position:absolute;left:376px;top:199px;width:59px;height:1px;background:#dcdcdc;"></div><div style="position:absolute;left:435px;top:180px;width:60px;height:20px;background:#fff;"></div><div style="position:absolute;left:494px;top:180px;width:1px;height:20px;background:#dcdcdc;"></div><div style="position:absolute;left:435px;top:199px;width:60px;height:1px;background:#dcdcdc;"></div><div style="position:absolute;left:0px;top:200px;width:40px;height:20px;background:#f0f0f0;"></div><div style="position:absolute;left:0px;top:200px;width:39px;height:1px;background:#fff;"></div><div style="position:absolute;left:0px;top:200px;width:1px;height:20px;background:#fff;"></div><div style="position:absolute;left:39px;top:200px;width:1px;height:20px;background:#a0a0a0;"></div><div style="position:absolute;left:1px;top:219px;width:39px;height:1px;background:#a0a0a0;"></div><div style="position:absolute;left:0px;top:204px;font-size:11px;line-height:13px;color:#000;font-weight:bold;white-space:nowrap;width:39px;text-align:center;padding-left:1px;box-sizing:border-box;width:40px;-webkit-text-stroke:0.2px #000;"><span style="display:inline-block;transform:scaleX(1.22)">10</span></div><div style="position:absolute;left:40px;top:200px;width:30px;height:20px;background:#fff;"></div><div style="position:absolute;left:69px;top:200px;width:1px;height:20px;background:#dcdcdc;"></div><div style="position:absolute;left:40px;top:219px;width:30px;height:1px;background:#dcdcdc;"></div><div style="position:absolute;left:43px;top:202px;font-size:11px;line-height:13px;color:#000;white-space:nowrap;letter-spacing:-0.18px;"><span style="font-family:Liberation Serif;font-size:12px;">I</span>13</div><div style="position:absolute;left:70px;top:200px;width:63px;height:20px;background:#fff;"></div><div style="position:absolute;left:132px;top:200px;width:1px;height:20px;background:#dcdcdc;"></div><div style="position:absolute;left:70px;top:219px;width:63px;height:1px;background:#dcdcdc;"></div><div style="position:absolute;left:133px;top:200px;width:66px;height:20px;background:#fff;"></div><div style="position:absolute;left:198px;top:200px;width:1px;height:20px;background:#dcdcdc;"></div><div style="position:absolute;left:133px;top:219px;width:66px;height:1px;background:#dcdcdc;"></div><div style="position:absolute;left:199px;top:200px;width:66px;height:20px;background:#fff;"></div><div style="position:absolute;left:264px;top:200px;width:1px;height:20px;background:#dcdcdc;"></div><div style="position:absolute;left:199px;top:219px;width:66px;height:1px;background:#dcdcdc;"></div><div style="position:absolute;left:265px;top:200px;width:60px;height:20px;background:#fff;"></div><div style="position:absolute;left:324px;top:200px;width:1px;height:20px;background:#dcdcdc;"></div><div style="position:absolute;left:265px;top:219px;width:60px;height:1px;background:#dcdcdc;"></div><div style="position:absolute;left:325px;top:200px;width:51px;height:20px;background:#fff;"></div><div style="position:absolute;left:375px;top:200px;width:1px;height:20px;background:#dcdcdc;"></div><div style="position:absolute;left:325px;top:219px;width:51px;height:1px;background:#dcdcdc;"></div><div style="position:absolute;left:376px;top:200px;width:59px;height:20px;background:#fff;"></div><div style="position:absolute;left:434px;top:200px;width:1px;height:20px;background:#dcdcdc;"></div><div style="position:absolute;left:376px;top:219px;width:59px;height:1px;background:#dcdcdc;"></div><div style="position:absolute;left:435px;top:200px;width:60px;height:20px;background:#fff;"></div><div style="position:absolute;left:494px;top:200px;width:1px;height:20px;background:#dcdcdc;"></div><div style="position:absolute;left:435px;top:219px;width:60px;height:1px;background:#dcdcdc;"></div><div style="position:absolute;left:0px;top:220px;width:40px;height:20px;background:#f0f0f0;"></div><div style="position:absolute;left:0px;top:220px;width:39px;height:1px;background:#fff;"></div><div style="position:absolute;left:0px;top:220px;width:1px;height:20px;background:#fff;"></div><div style="position:absolute;left:39px;top:220px;width:1px;height:20px;background:#a0a0a0;"></div><div style="position:absolute;left:1px;top:239px;width:39px;height:1px;background:#a0a0a0;"></div><div style="position:absolute;left:0px;top:224px;font-size:11px;line-height:13px;color:#000;font-weight:bold;white-space:nowrap;width:39px;text-align:center;padding-left:1px;box-sizing:border-box;width:40px;-webkit-text-stroke:0.2px #000;"><span style="display:inline-block;transform:scaleX(1.22)">11</span></div><div style="position:absolute;left:40px;top:220px;width:30px;height:20px;background:#fff;"></div><div style="position:absolute;left:69px;top:220px;width:1px;height:20px;background:#dcdcdc;"></div><div style="position:absolute;left:40px;top:239px;width:30px;height:1px;background:#dcdcdc;"></div><div style="position:absolute;left:43px;top:222px;font-size:11px;line-height:13px;color:#000;white-space:nowrap;letter-spacing:-0.18px;"><span style="font-family:Liberation Serif;font-size:12px;">I</span>14</div><div style="position:absolute;left:70px;top:220px;width:63px;height:20px;background:#fff;"></div><div style="position:absolute;left:132px;top:220px;width:1px;height:20px;background:#dcdcdc;"></div><div style="position:absolute;left:70px;top:239px;width:63px;height:1px;background:#dcdcdc;"></div><div style="position:absolute;left:133px;top:220px;width:66px;height:20px;background:#fff;"></div><div style="position:absolute;left:198px;top:220px;width:1px;height:20px;background:#dcdcdc;"></div><div style="position:absolute;left:133px;top:239px;width:66px;height:1px;background:#dcdcdc;"></div><div style="position:absolute;left:199px;top:220px;width:66px;height:20px;background:#fff;"></div><div style="position:absolute;left:264px;top:220px;width:1px;height:20px;background:#dcdcdc;"></div><div style="position:absolute;left:199px;top:239px;width:66px;height:1px;background:#dcdcdc;"></div><div style="position:absolute;left:265px;top:220px;width:60px;height:20px;background:#fff;"></div><div style="position:absolute;left:324px;top:220px;width:1px;height:20px;background:#dcdcdc;"></div><div style="position:absolute;left:265px;top:239px;width:60px;height:1px;background:#dcdcdc;"></div><div style="position:absolute;left:325px;top:220px;width:51px;height:20px;background:#fff;"></div><div style="position:absolute;left:375px;top:220px;width:1px;height:20px;background:#dcdcdc;"></div><div style="position:absolute;left:325px;top:239px;width:51px;height:1px;background:#dcdcdc;"></div><div style="position:absolute;left:376px;top:220px;width:59px;height:20px;background:#fff;"></div><div style="position:absolute;left:434px;top:220px;width:1px;height:20px;background:#dcdcdc;"></div><div style="position:absolute;left:376px;top:239px;width:59px;height:1px;background:#dcdcdc;"></div><div style="position:absolute;left:435px;top:220px;width:60px;height:20px;background:#fff;"></div><div style="position:absolute;left:494px;top:220px;width:1px;height:20px;background:#dcdcdc;"></div><div style="position:absolute;left:435px;top:239px;width:60px;height:1px;background:#dcdcdc;"></div><div style="position:absolute;left:0px;top:240px;width:40px;height:20px;background:#f0f0f0;"></div><div style="position:absolute;left:0px;top:240px;width:39px;height:1px;background:#fff;"></div><div style="position:absolute;left:0px;top:240px;width:1px;height:20px;background:#fff;"></div><div style="position:absolute;left:39px;top:240px;width:1px;height:20px;background:#a0a0a0;"></div><div style="position:absolute;left:1px;top:259px;width:39px;height:1px;background:#a0a0a0;"></div><div style="position:absolute;left:0px;top:244px;font-size:11px;line-height:13px;color:#000;font-weight:bold;white-space:nowrap;width:39px;text-align:center;padding-left:1px;box-sizing:border-box;width:40px;-webkit-text-stroke:0.2px #000;"><span style="display:inline-block;transform:scaleX(1.22)">12</span></div><div style="position:absolute;left:40px;top:240px;width:30px;height:20px;background:#fff;"></div><div style="position:absolute;left:69px;top:240px;width:1px;height:20px;background:#dcdcdc;"></div><div style="position:absolute;left:40px;top:259px;width:30px;height:1px;background:#dcdcdc;"></div><div style="position:absolute;left:43px;top:242px;font-size:11px;line-height:13px;color:#000;white-space:nowrap;letter-spacing:-0.18px;"><span style="font-family:Liberation Serif;font-size:12px;">I</span>16</div><div style="position:absolute;left:70px;top:240px;width:63px;height:20px;background:#fff;"></div><div style="position:absolute;left:132px;top:240px;width:1px;height:20px;background:#dcdcdc;"></div><div style="position:absolute;left:70px;top:259px;width:63px;height:1px;background:#dcdcdc;"></div><div style="position:absolute;left:133px;top:240px;width:66px;height:20px;background:#fff;"></div><div style="position:absolute;left:198px;top:240px;width:1px;height:20px;background:#dcdcdc;"></div><div style="position:absolute;left:133px;top:259px;width:66px;height:1px;background:#dcdcdc;"></div><div style="position:absolute;left:199px;top:240px;width:66px;height:20px;background:#fff;"></div><div style="position:absolute;left:264px;top:240px;width:1px;height:20px;background:#dcdcdc;"></div><div style="position:absolute;left:199px;top:259px;width:66px;height:1px;background:#dcdcdc;"></div><div style="position:absolute;left:265px;top:240px;width:60px;height:20px;background:#fff;"></div><div style="position:absolute;left:324px;top:240px;width:1px;height:20px;background:#dcdcdc;"></div><div style="position:absolute;left:265px;top:259px;width:60px;height:1px;background:#dcdcdc;"></div><div style="position:absolute;left:325px;top:240px;width:51px;height:20px;background:#fff;"></div><div style="position:absolute;left:375px;top:240px;width:1px;height:20px;background:#dcdcdc;"></div><div style="position:absolute;left:325px;top:259px;width:51px;height:1px;background:#dcdcdc;"></div><div style="position:absolute;left:376px;top:240px;width:59px;height:20px;background:#fff;"></div><div style="position:absolute;left:434px;top:240px;width:1px;height:20px;background:#dcdcdc;"></div><div style="position:absolute;left:376px;top:259px;width:59px;height:1px;background:#dcdcdc;"></div><div style="position:absolute;left:435px;top:240px;width:60px;height:20px;background:#fff;"></div><div style="position:absolute;left:494px;top:240px;width:1px;height:20px;background:#dcdcdc;"></div><div style="position:absolute;left:435px;top:259px;width:60px;height:1px;background:#dcdcdc;"></div><div style="position:absolute;left:0px;top:260px;width:40px;height:20px;background:#f0f0f0;"></div><div style="position:absolute;left:0px;top:260px;width:39px;height:1px;background:#fff;"></div><div style="position:absolute;left:0px;top:260px;width:1px;height:20px;background:#fff;"></div><div style="position:absolute;left:39px;top:260px;width:1px;height:20px;background:#a0a0a0;"></div><div style="position:absolute;left:1px;top:279px;width:39px;height:1px;background:#a0a0a0;"></div><div style="position:absolute;left:0px;top:264px;font-size:11px;line-height:13px;color:#000;font-weight:bold;white-space:nowrap;width:39px;text-align:center;padding-left:1px;box-sizing:border-box;width:40px;-webkit-text-stroke:0.2px #000;"><span style="display:inline-block;transform:scaleX(1.22)">13</span></div><div style="position:absolute;left:40px;top:260px;width:30px;height:20px;background:#fff;"></div><div style="position:absolute;left:69px;top:260px;width:1px;height:20px;background:#dcdcdc;"></div><div style="position:absolute;left:40px;top:279px;width:30px;height:1px;background:#dcdcdc;"></div><div style="position:absolute;left:43px;top:262px;font-size:11px;line-height:13px;color:#000;white-space:nowrap;letter-spacing:-0.18px;"><span style="font-family:Liberation Serif;font-size:12px;">I</span>18</div><div style="position:absolute;left:70px;top:260px;width:63px;height:20px;background:#fff;"></div><div style="position:absolute;left:132px;top:260px;width:1px;height:20px;background:#dcdcdc;"></div><div style="position:absolute;left:70px;top:279px;width:63px;height:1px;background:#dcdcdc;"></div><div style="position:absolute;left:133px;top:260px;width:66px;height:20px;background:#fff;"></div><div style="position:absolute;left:198px;top:260px;width:1px;height:20px;background:#dcdcdc;"></div><div style="position:absolute;left:133px;top:279px;width:66px;height:1px;background:#dcdcdc;"></div><div style="position:absolute;left:199px;top:260px;width:66px;height:20px;background:#fff;"></div><div style="position:absolute;left:264px;top:260px;width:1px;height:20px;background:#dcdcdc;"></div><div style="position:absolute;left:199px;top:279px;width:66px;height:1px;background:#dcdcdc;"></div><div style="position:absolute;left:265px;top:260px;width:60px;height:20px;background:#fff;"></div><div style="position:absolute;left:324px;top:260px;width:1px;height:20px;background:#dcdcdc;"></div><div style="position:absolute;left:265px;top:279px;width:60px;height:1px;background:#dcdcdc;"></div><div style="position:absolute;left:325px;top:260px;width:51px;height:20px;background:#fff;"></div><div style="position:absolute;left:375px;top:260px;width:1px;height:20px;background:#dcdcdc;"></div><div style="position:absolute;left:325px;top:279px;width:51px;height:1px;background:#dcdcdc;"></div><div style="position:absolute;left:376px;top:260px;width:59px;height:20px;background:#fff;"></div><div style="position:absolute;left:434px;top:260px;width:1px;height:20px;background:#dcdcdc;"></div><div style="position:absolute;left:376px;top:279px;width:59px;height:1px;background:#dcdcdc;"></div><div style="position:absolute;left:435px;top:260px;width:60px;height:20px;background:#fff;"></div><div style="position:absolute;left:494px;top:260px;width:1px;height:20px;background:#dcdcdc;"></div><div style="position:absolute;left:435px;top:279px;width:60px;height:1px;background:#dcdcdc;"></div><div style="position:absolute;left:0px;top:280px;width:40px;height:20px;background:#f0f0f0;"></div><div style="position:absolute;left:0px;top:280px;width:39px;height:1px;background:#fff;"></div><div style="position:absolute;left:0px;top:280px;width:1px;height:20px;background:#fff;"></div><div style="position:absolute;left:39px;top:280px;width:1px;height:20px;background:#a0a0a0;"></div><div style="position:absolute;left:1px;top:299px;width:39px;height:1px;background:#a0a0a0;"></div><div style="position:absolute;left:0px;top:284px;font-size:11px;line-height:13px;color:#000;font-weight:bold;white-space:nowrap;width:39px;text-align:center;padding-left:1px;box-sizing:border-box;width:40px;-webkit-text-stroke:0.2px #000;"><span style="display:inline-block;transform:scaleX(1.22)">14</span></div><div style="position:absolute;left:40px;top:280px;width:30px;height:20px;background:#fff;"></div><div style="position:absolute;left:69px;top:280px;width:1px;height:20px;background:#dcdcdc;"></div><div style="position:absolute;left:40px;top:299px;width:30px;height:1px;background:#dcdcdc;"></div><div style="position:absolute;left:43px;top:282px;font-size:11px;line-height:13px;color:#000;white-space:nowrap;letter-spacing:-0.18px;"><span style="font-family:Liberation Serif;font-size:12px;">I</span>19</div><div style="position:absolute;left:70px;top:280px;width:63px;height:20px;background:#fff;"></div><div style="position:absolute;left:132px;top:280px;width:1px;height:20px;background:#dcdcdc;"></div><div style="position:absolute;left:70px;top:299px;width:63px;height:1px;background:#dcdcdc;"></div><div style="position:absolute;left:73px;top:282px;font-size:11px;line-height:13px;color:#000;white-space:nowrap;letter-spacing:-0.18px;">Brett K</div><div style="position:absolute;left:133px;top:280px;width:66px;height:20px;background:#fff;"></div><div style="position:absolute;left:198px;top:280px;width:1px;height:20px;background:#dcdcdc;"></div><div style="position:absolute;left:133px;top:299px;width:66px;height:1px;background:#dcdcdc;"></div><div style="position:absolute;left:199px;top:280px;width:66px;height:20px;background:#fff;"></div><div style="position:absolute;left:264px;top:280px;width:1px;height:20px;background:#dcdcdc;"></div><div style="position:absolute;left:199px;top:299px;width:66px;height:1px;background:#dcdcdc;"></div><div style="position:absolute;left:265px;top:280px;width:60px;height:20px;background:#fff;"></div><div style="position:absolute;left:324px;top:280px;width:1px;height:20px;background:#dcdcdc;"></div><div style="position:absolute;left:265px;top:299px;width:60px;height:1px;background:#dcdcdc;"></div><div style="position:absolute;left:325px;top:280px;width:51px;height:20px;background:#fff;"></div><div style="position:absolute;left:375px;top:280px;width:1px;height:20px;background:#dcdcdc;"></div><div style="position:absolute;left:325px;top:299px;width:51px;height:1px;background:#dcdcdc;"></div><div style="position:absolute;left:376px;top:280px;width:59px;height:20px;background:#fff;"></div><div style="position:absolute;left:434px;top:280px;width:1px;height:20px;background:#dcdcdc;"></div><div style="position:absolute;left:376px;top:299px;width:59px;height:1px;background:#dcdcdc;"></div><div style="position:absolute;left:435px;top:280px;width:60px;height:20px;background:#fff;"></div><div style="position:absolute;left:494px;top:280px;width:1px;height:20px;background:#dcdcdc;"></div><div style="position:absolute;left:435px;top:299px;width:60px;height:1px;background:#dcdcdc;"></div><div style="position:absolute;left:0px;top:300px;width:40px;height:20px;background:#f0f0f0;"></div><div style="position:absolute;left:0px;top:300px;width:39px;height:1px;background:#fff;"></div><div style="position:absolute;left:0px;top:300px;width:1px;height:20px;background:#fff;"></div><div style="position:absolute;left:39px;top:300px;width:1px;height:20px;background:#a0a0a0;"></div><div style="position:absolute;left:1px;top:319px;width:39px;height:1px;background:#a0a0a0;"></div><div style="position:absolute;left:0px;top:304px;font-size:11px;line-height:13px;color:#000;font-weight:bold;white-space:nowrap;width:39px;text-align:center;padding-left:1px;box-sizing:border-box;width:40px;-webkit-text-stroke:0.2px #000;"><span style="display:inline-block;transform:scaleX(1.22)">15</span></div><div style="position:absolute;left:40px;top:300px;width:30px;height:20px;background:#fff;"></div><div style="position:absolute;left:69px;top:300px;width:1px;height:20px;background:#dcdcdc;"></div><div style="position:absolute;left:40px;top:319px;width:30px;height:1px;background:#dcdcdc;"></div><div style="position:absolute;left:43px;top:302px;font-size:11px;line-height:13px;color:#000;white-space:nowrap;letter-spacing:-0.18px;"><span style="font-family:Liberation Serif;font-size:12px;">I</span>20</div><div style="position:absolute;left:70px;top:300px;width:63px;height:20px;background:#fff;"></div><div style="position:absolute;left:132px;top:300px;width:1px;height:20px;background:#dcdcdc;"></div><div style="position:absolute;left:70px;top:319px;width:63px;height:1px;background:#dcdcdc;"></div><div style="position:absolute;left:133px;top:300px;width:66px;height:20px;background:#fff;"></div><div style="position:absolute;left:198px;top:300px;width:1px;height:20px;background:#dcdcdc;"></div><div style="position:absolute;left:133px;top:319px;width:66px;height:1px;background:#dcdcdc;"></div><div style="position:absolute;left:199px;top:300px;width:66px;height:20px;background:#fff;"></div><div style="position:absolute;left:264px;top:300px;width:1px;height:20px;background:#dcdcdc;"></div><div style="position:absolute;left:199px;top:319px;width:66px;height:1px;background:#dcdcdc;"></div><div style="position:absolute;left:265px;top:300px;width:60px;height:20px;background:#fff;"></div><div style="position:absolute;left:324px;top:300px;width:1px;height:20px;background:#dcdcdc;"></div><div style="position:absolute;left:265px;top:319px;width:60px;height:1px;background:#dcdcdc;"></div><div style="position:absolute;left:325px;top:300px;width:51px;height:20px;background:#fff;"></div><div style="position:absolute;left:375px;top:300px;width:1px;height:20px;background:#dcdcdc;"></div><div style="position:absolute;left:325px;top:319px;width:51px;height:1px;background:#dcdcdc;"></div><div style="position:absolute;left:376px;top:300px;width:59px;height:20px;background:#fff;"></div><div style="position:absolute;left:434px;top:300px;width:1px;height:20px;background:#dcdcdc;"></div><div style="position:absolute;left:376px;top:319px;width:59px;height:1px;background:#dcdcdc;"></div><div style="position:absolute;left:435px;top:300px;width:60px;height:20px;background:#fff;"></div><div style="position:absolute;left:494px;top:300px;width:1px;height:20px;background:#dcdcdc;"></div><div style="position:absolute;left:435px;top:319px;width:60px;height:1px;background:#dcdcdc;"></div></div><div style="position:absolute;left:662px;top:82px;width:1px;height:299px;background:#fcfcfc;"></div><div style="position:absolute;left:663px;top:82px;width:16px;height:299px;background:#f0f0f0;"></div><div style="position:absolute;left:663px;top:99px;width:15px;height:172px;background:#cdcdcd;"></div><svg style="position:absolute;left:666px;top:88px" width="10" height="7"><path d="M1 5.5 L4.75 1.75 L8.5 5.5" fill="none" stroke="#606060" stroke-width="2"/></svg><svg style="position:absolute;left:666px;top:368px" width="10" height="7"><path d="M1 1.5 L4.75 5.25 L8.5 1.5" fill="none" stroke="#606060" stroke-width="2"/></svg><div style="position:absolute;left:216px;top:381px;width:463px;height:16px;background:#f0f0f0;"></div><div style="position:absolute;left:233px;top:381px;width:295px;height:15px;background:#cdcdcd;"></div><svg style="position:absolute;left:220px;top:384px" width="8" height="10"><path d="M6 1.2 L2.5 4.6 L6 8" fill="none" stroke="#606060" stroke-width="2"/></svg><svg style="position:absolute;left:651px;top:384px" width="7" height="10"><path d="M1.5 1 L5.25 4.75 L1.5 8.5" fill="none" stroke="#606060" stroke-width="2"/></svg><div style="position:absolute;left:279px;top:167px;width:228px;height:201px;border:1px solid #a0a0a0;background:#f2f2f2;box-shadow:2px 2px 2px rgba(0,0,0,0.5)"></div><div style="position:absolute;left:310px;top:239px;width:195px;height:1px;background:#d7d7d7;"></div><div style="position:absolute;left:310px;top:290px;width:195px;height:1px;background:#d7d7d7;"></div><div style="position:absolute;left:310px;top:341px;width:195px;height:1px;background:#d7d7d7;"></div><div style="position:absolute;left:282px;top:316px;width:223px;height:22px;background:#91c9f7;"></div><div style="position:absolute;left:314px;top:174px;font-size:12px;line-height:14px;color:#000;white-space:nowrap;letter-spacing:0.08px;">Link this row to an entity</div><div style="position:absolute;left:314px;top:196px;font-size:12px;line-height:14px;color:#000;white-space:nowrap;letter-spacing:0.08px;">Link with Label</div><div style="position:absolute;left:314px;top:218px;font-size:12px;line-height:14px;color:#000;white-space:nowrap;letter-spacing:0.08px;">Remove link</div><div style="position:absolute;left:314px;top:247px;font-size:12px;line-height:14px;color:#000;white-space:nowrap;letter-spacing:0.08px;">Label an entity (no link)</div><div style="position:absolute;left:314px;top:269px;font-size:12px;line-height:14px;color:#000;white-space:nowrap;letter-spacing:0.08px;">Apply current label format</div><div style="position:absolute;left:314px;top:298px;font-size:12px;line-height:14px;color:#000;white-space:nowrap;letter-spacing:0.08px;">Show linked entity</div><div style="position:absolute;left:314px;top:320px;font-size:12px;line-height:14px;color:#000;white-space:nowrap;letter-spacing:0.08px;">Select linked entity</div><div style="position:absolute;left:314px;top:349px;font-size:12px;line-height:14px;color:#000;white-space:nowrap;letter-spacing:0.08px;">Add a new row</div><div style="position:absolute;left:219px;top:417px;font-size:11px;line-height:13px;color:#000;white-space:nowrap;">Use Label Format:</div><div style="position:absolute;left:316px;top:412px;width:142px;height:19px;border:1px solid #a2a2a2;background:#fff"></div><div style="position:absolute;left:320px;top:417px;font-size:11px;line-height:13px;color:#000;white-space:nowrap;letter-spacing:-0.2px;">Allocation</div><div style="position:absolute;left:441px;top:414px;width:15px;height:15px;border:1px solid #a0a8ac;border-radius:3px;background:linear-gradient(#f0f2f4 0%,#e8ebee 50%,#d8dde2 55%,#eef1f4 100%)"></div><svg style="position:absolute;left:446px;top:420px" width="7" height="4"><path d="M0.5 0.5 L6.5 0.5 L3.5 3.8 Z" fill="#555"/></svg><div style="position:absolute;left:606px;top:410px;width:73px;height:21px;border:1px solid #9aa2a8;border-radius:3px;box-shadow:inset 0 0 0 1px #fff;background:linear-gradient(#e2e7ee 0%,#dbe2ea 46%,#a0aab6 50%,#bac3cd 72%,#e2e8ee 100%)"></div><div style="position:absolute;left:605px;top:415px;font-size:12px;line-height:14px;color:#000;white-space:nowrap;width:75px;text-align:center;letter-spacing:-0.9px;">Close</div>
</body></html>
